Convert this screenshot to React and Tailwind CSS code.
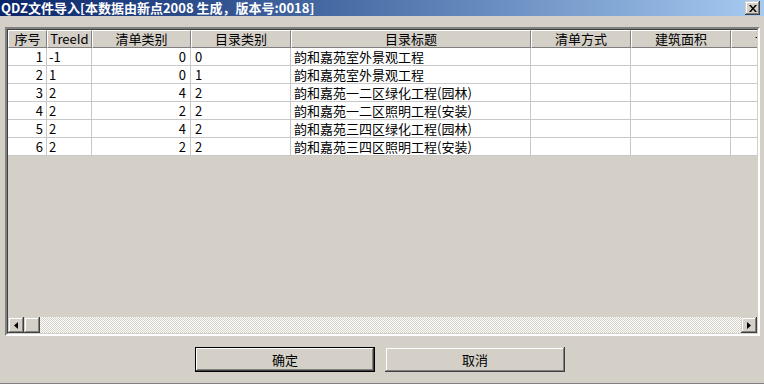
import React from "react";

const cols = [
  { title: "序号", w: "w-[39px]", align: "text-right pr-[3px]" },
  { title: "TreeId", w: "w-[45px]", align: "text-left pl-[2px]" },
  { title: "清单类别", w: "w-[99px]", align: "text-right pr-[4px]" },
  { title: "目录类别", w: "w-[100px]", align: "text-left pl-[4px]" },
  { title: "目录标题", w: "w-[240px]", align: "text-left pl-[3px]" },
  { title: "清单方式", w: "w-[100px]", align: "text-left pl-[3px]" },
  { title: "建筑面积", w: "w-[100px]", align: "text-left pl-[3px]" },
  { title: "计价方式", w: "w-[100px]", align: "text-left pl-[3px]" },
];

const rows = [
  ["1", "-1", "0", "0", "韵和嘉苑室外景观工程", "", "", ""],
  ["2", "1", "0", "1", "韵和嘉苑室外景观工程", "", "", ""],
  ["3", "2", "4", "2", "韵和嘉苑一二区绿化工程(园林)", "", "", ""],
  ["4", "2", "2", "2", "韵和嘉苑一二区照明工程(安装)", "", "", ""],
  ["5", "2", "4", "2", "韵和嘉苑三四区绿化工程(园林)", "", "", ""],
  ["6", "2", "2", "2", "韵和嘉苑三四区照明工程(安装)", "", "", ""],
];

const raised =
  "shadow-[inset_-1px_-1px_#404040,inset_1px_1px_#d4d0c8,inset_-2px_-2px_#808080,inset_2px_2px_#ffffff]";

const App = () => {
  return (
    <div className="w-[764px] h-[384px] bg-[#d4d0c8] flex flex-col border-b border-[#808080] font-['Noto_Sans_CJK_SC',sans-serif] text-[13px] text-black overflow-hidden">
      {/* Title bar */}
      <div className="h-[16px] flex items-center justify-between bg-linear-to-r from-[#0a246a] to-[#a6caf0] pl-[1px] pr-[4px]">
        <span className="text-white font-bold leading-[16px] text-[13px]">
          QDZ文件导入[本数据由新点2008 生成，版本号:0018]
        </span>
        <div className={`w-[15px] h-[14px] bg-[#d4d0c8] flex items-center justify-center ${raised}`}>
          <svg width="8" height="7" viewBox="0 0 8 7">
            <path d="M0 0h2l2 2.5L6 0h2L5 3.5 8 7H6L4 4.5 2 7H0l3-3.5z" fill="#000" />
          </svg>
        </div>
      </div>

      {/* Grid */}
      <div className="mt-[11px] ml-[5px] w-[755px] h-[309px] border-2 border-t-[#808080] border-l-[#808080] border-r-[#ffffff] border-b-[#ffffff] flex flex-col">
        <div className="flex-1 flex flex-col border border-t-[#404040] border-l-[#404040] border-r-[#d4d0c8] border-b-[#d4d0c8] overflow-hidden">
          <div className="flex flex-col flex-1 overflow-hidden">
            {/* Header */}
            <div className="flex h-[18px] shrink-0">
              {cols.map((c) => (
                <div
                  key={c.title}
                  className={`${c.w} shrink-0 h-[18px] text-center leading-[16px] whitespace-nowrap overflow-hidden border border-t-white border-l-white border-r-[#808080] border-b-[#808080]`}
                >
                  {c.title}
                </div>
              ))}
            </div>
            {/* Rows */}
            {rows.map((r, i) => (
              <div key={i} className="flex h-[18px] shrink-0">
                {cols.map((c, j) => (
                  <div
                    key={j}
                    className={`${c.w} ${c.align} shrink-0 h-[18px] leading-[17px] whitespace-nowrap overflow-hidden bg-white border-r border-b border-[#c8c8c8]`}
                  >
                    {r[j]}
                  </div>
                ))}
              </div>
            ))}
          </div>

          {/* Horizontal scrollbar */}
          <div className="h-[16px] flex shrink-0">
            <div className={`w-[16px] h-[16px] bg-[#d4d0c8] flex items-center justify-center ${raised}`}>
              <svg width="4" height="7" viewBox="0 0 4 7">
                <path d="M4 0v7L0 3.5z" fill="#000" />
              </svg>
            </div>
            <div className={`w-[16px] h-[16px] bg-[#d4d0c8] ${raised}`} />
            <div className="flex-1 h-[16px] bg-[repeating-conic-gradient(#d4d0c8_0_25%,#ffffff_0_50%)] bg-[length:2px_2px]" />
            <div className={`w-[16px] h-[16px] bg-[#d4d0c8] flex items-center justify-center ${raised}`}>
              <svg width="4" height="7" viewBox="0 0 4 7">
                <path d="M0 0v7l4-3.5z" fill="#000" />
              </svg>
            </div>
          </div>
        </div>
      </div>

      {/* Buttons */}
      <div className="mt-[11px] flex pl-[195px] gap-[10px]">
        <button className="w-[180px] h-[25px] bg-[#d4d0c8] border border-black shadow-[inset_-1px_-1px_#404040,inset_1px_1px_#ffffff,inset_-2px_-2px_#808080] text-[13px]">
          确定
        </button>
        <button className={`w-[180px] h-[25px] bg-[#d4d0c8] ${raised} text-[13px]`}>
          取消
        </button>
      </div>
    </div>
  );
};

export default App;
